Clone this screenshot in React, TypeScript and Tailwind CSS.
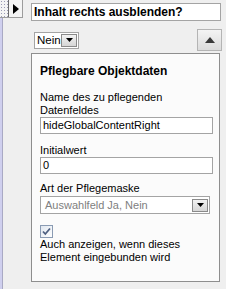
export default function App() {
  return (
    <div className="relative flex h-[289px] w-[226px] overflow-hidden bg-[#efefef] font-['Liberation_Sans',Arial,sans-serif] text-[11px] leading-[13px] text-black">
      {/* left frame strip */}
      <div className="h-full w-[3px] shrink-0 border-r border-[#a9a9c4] bg-[#cfcfee]" />

      {/* grip + collapse handle */}
      <div className="absolute left-0 top-0 flex h-[18px] w-[23px] border-b border-r border-[#9c9c9c] bg-[#f4f4f4]">
        <div className="h-full w-[9px] border-r border-[#6b6b6b] bg-[radial-gradient(circle,#9a9ab4_0.8px,transparent_1px)] bg-[length:3px_3px]" />
        <div className="flex flex-1 items-center justify-center">
          <svg width="6" height="10" viewBox="0 0 6 10">
            <path d="M0 0 L6 5 L0 10 Z" fill="#000" />
          </svg>
        </div>
      </div>

      <div className="flex flex-1 flex-col pt-[3px]">
        {/* title field */}
        <div className="ml-[28px] flex h-[18px] w-[190px] items-center border border-[#a4a4a4] bg-white pl-[2px] text-[12px] font-bold">
          Inhalt rechts ausblenden?
        </div>

        {/* select + toggle row */}
        <div className="mt-[8px] flex h-[22px] items-center">
          <div className="ml-[31px] flex h-[17px] w-[45px] items-center border border-[#a4a4a4] bg-white">
            <span className="flex-1 pl-[2px] text-[11.5px]">Nein</span>
            <DownButton />
          </div>
          <div className="ml-auto mr-[4px] flex h-[22px] w-[25px] items-center justify-center border border-[#b4b4b4] bg-gradient-to-b from-[#f4f4f4] to-[#dcdcdc]">
            <svg width="10" height="6" viewBox="0 0 10 6">
              <path d="M0 6 L5 0 L10 6 Z" fill="#3a3a3a" />
            </svg>
          </div>
        </div>

        {/* data box */}
        <div className="ml-[28px] mt-[2px] flex h-[229px] w-[189px] flex-col border border-[#8e8e8e] bg-[#fbfbfb] pl-[8px] pr-[6px]">
          <div className="mt-[10px] text-[12px] font-bold leading-[14px]">Pflegbare Objektdaten</div>

          <div className="mt-[13px]">Name des zu pflegenden</div>
          <div>Datenfeldes</div>
          <div className="flex h-[17px] w-[173px] items-center border border-[#a4a4a4] bg-white pl-[2px]">
            hideGlobalContentRight
          </div>

          <div className="mt-[10px]">Initialwert</div>
          <div className="flex h-[17px] w-[173px] items-center border border-[#a4a4a4] bg-white pl-[2px]">
            0
          </div>

          <div className="mt-[8px]">Art der Pflegemaske</div>
          <div className="mt-[1px] flex h-[18px] w-[170px] items-center border border-[#a4a4a4] bg-white">
            <span className="flex-1 pl-[4px] text-[#808080]">Auswahlfeld Ja, Nein</span>
            <DownButton />
          </div>

          <div className="mt-[11px] h-[13px] w-[13px]">
            <svg width="13" height="13" viewBox="0 0 13 13">
              <defs>
                <linearGradient id="cb" x1="0" y1="0" x2="1" y2="1">
                  <stop offset="0" stopColor="#dfe6ef" />
                  <stop offset="1" stopColor="#ffffff" />
                </linearGradient>
              </defs>
              <rect x="0.5" y="0.5" width="12" height="12" fill="url(#cb)" stroke="#8a9bb3" />
              <path d="M3 6.5 L5.3 9 L10 3.5" fill="none" stroke="#4d5f80" strokeWidth="1.8" />
            </svg>
          </div>
          <div className="mt-0">
            Auch anzeigen, wenn dieses
            <br />
            Element eingebunden wird
          </div>
        </div>
      </div>
    </div>
  );
}

function DownButton() {
  return (
    <div className="mr-[1px] flex h-[13px] w-[16px] items-center justify-center border border-[#8a8a8a] bg-gradient-to-b from-[#f2f2f2] to-[#d6d6d6]">
      <svg width="7" height="4" viewBox="0 0 7 4">
        <path d="M0 0 L7 0 L3.5 4 Z" fill="#000" />
      </svg>
    </div>
  );
}
